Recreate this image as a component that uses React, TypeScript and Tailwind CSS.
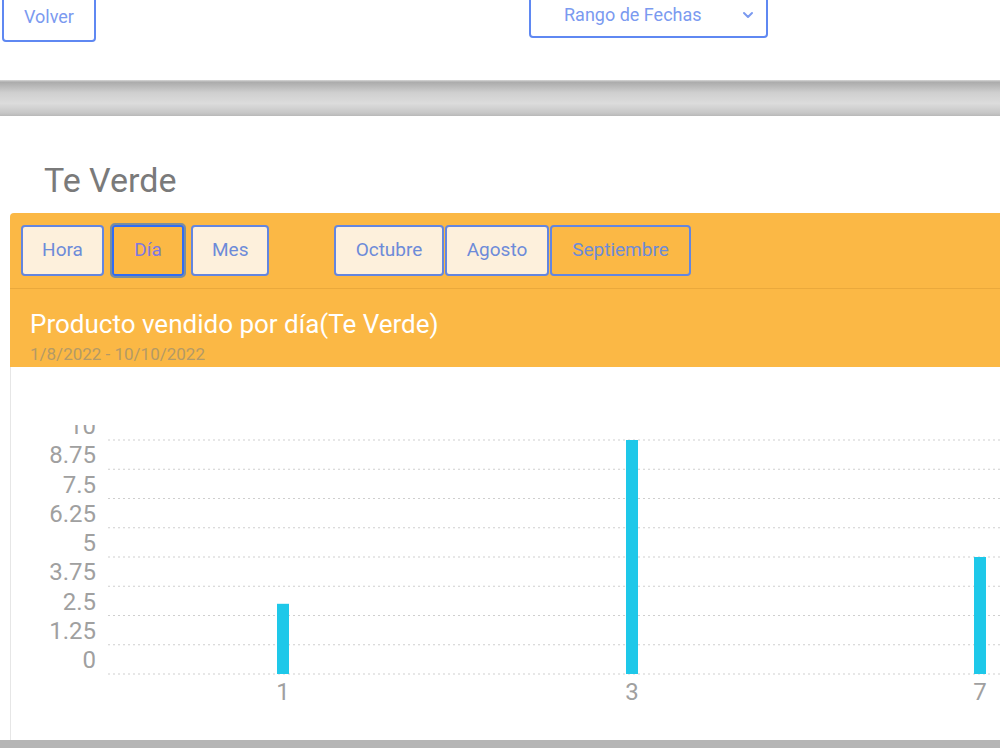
import { ChevronDown } from "lucide-react";

const GRID = [10, 8.75, 7.5, 6.25, 5, 3.75, 2.5, 1.25, 0];
const TOP = 73;
const STEP = 29.25;
const BASE = TOP + STEP * 8;

// day -> units sold
const BARS = [
  { label: "1", x: 282, value: 3 },
  { label: "3", x: 631, value: 10 },
  { label: "7", x: 979, value: 5 },
];

function Chart() {
  return (
    <svg width="990" height="373" className="block" style={{ fontFamily: "Roboto, sans-serif" }}>
      <defs>
        <clipPath id="plot">
          <rect x="0" y="58" width="990" height="315" />
        </clipPath>
      </defs>
      <g clipPath="url(#plot)">
        {GRID.map((v, i) => (
          <g key={v}>
            <line
              x1="97"
              x2="990"
              y1={TOP + i * STEP}
              y2={TOP + i * STEP}
              stroke="#cfcfcf"
              strokeWidth="1"
              strokeDasharray="2 3"
            />
            <text x="85" y={TOP + i * STEP - 6} textAnchor="end" fontSize="24" fill="#a0a0a0">
              {v}
            </text>
          </g>
        ))}
        {BARS.map((b) => (
          <g key={b.label}>
            <rect
              x={b.x - 16}
              y={BASE - (b.value / 10) * STEP * 8}
              width="12"
              height={(b.value / 10) * STEP * 8}
              fill="#1ec8e9"
            />
            <text x={b.x - 10} y={BASE + 26} textAnchor="middle" fontSize="24" fill="#a0a0a0">
              {b.label}
            </text>
          </g>
        ))}
      </g>
    </svg>
  );
}

const btn =
  "h-[51px] rounded-[4px] border-2 border-[#6386e0] px-[19px] text-[19px] text-[#6d8bd9]";

export default function App() {
  return (
    <div className="w-[1000px] h-[750px] overflow-hidden bg-white font-['Roboto',sans-serif]">
      {/* filters panel */}
      <div className="h-[80px] bg-white flex items-start">
        <button className="ml-[2px] mt-[-8px] h-[50px] w-[94px] rounded-[4px] border-2 border-[#5f88f2] text-[18px] text-[#7b9af0] pb-[2px]">
          Volver
        </button>
        <div className="ml-[433px] mt-[-10px] h-[48px] w-[239px] rounded-[4px] border-2 border-[#5f88f2] flex items-center pt-[1px] pl-[33px] pr-[10px] text-[18px] text-[#7b9af0]">
          <span className="flex-1">Rango de Fechas</span>
          <ChevronDown size={16} strokeWidth={3} />
        </div>
      </div>

      <div className="h-[36px] bg-[linear-gradient(to_bottom,#d8d8d8_0%,#ababab_6%,#cfcfcf_35%,#dcdcdc_65%,#c6c6c6_92%,#b8b8b8_100%)]" />

      {/* product card */}
      <div className="bg-white">
        <h2 className="h-[97px] pl-[44px] pt-[44px] text-[34px] leading-[40px] text-[#7a7a7a]">Te Verde</h2>

        <div className="ml-[10px] h-[75px] rounded-tl-[4px] bg-[#fbb845] flex items-center pl-[11px]">
          <button className={`${btn} w-[83px] bg-[#fdf0dc]`}>Hora</button>
          <button className="ml-[6px] h-[55px] w-[76px] rounded-[5px] border-2 border-[#7c8e9c] p-0">
            <span className="flex h-full w-full items-center justify-center rounded-[3px] border-2 border-[#2f6cf5] bg-[#fbb845] text-[19px] text-[#7f78e0]">
              Día
            </span>
          </button>
          <button className={`${btn} ml-[5px] w-[78px] bg-[#fdf0dc]`}>Mes</button>
          <button className={`${btn} ml-[65px] w-[110px] bg-[#fdf0dc]`}>Octubre</button>
          <button className={`${btn} ml-[1px] w-[104px] bg-[#fdf0dc]`}>Agosto</button>
          <button className={`${btn} ml-[1px] w-[141px] bg-[#fbb845]`}>Septiembre</button>
        </div>

        <div className="ml-[10px] h-[79px] bg-[#fbb845] border-t border-[#eaa93c] pl-[20px] pt-[20px]">
          <div className="text-[26px] leading-[30px] text-white">Producto vendido por día(Te Verde)</div>
          <div className="mt-[6px] text-[17px] leading-[18px] text-[#b49a66]">1/8/2022 - 10/10/2022</div>
        </div>

        <div className="ml-[10px] h-[373px] border-l border-[#e6e6e6]">
          <Chart />
        </div>
      </div>

      <div className="h-[8px] bg-[#b5b5b5]" />
    </div>
  );
}
